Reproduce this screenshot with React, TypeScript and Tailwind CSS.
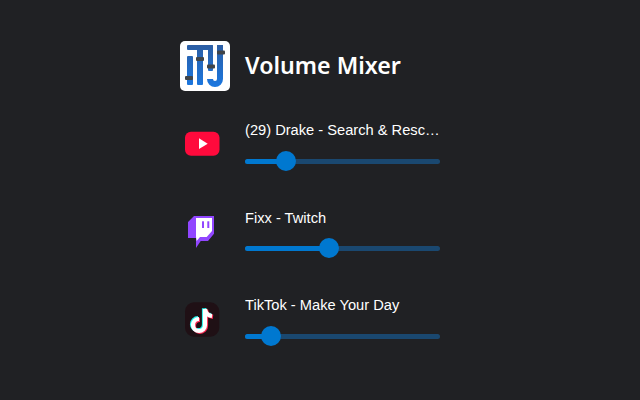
import React from "react";

function Logo() {
  return (
    <div className="w-[50px] h-[50px] bg-white rounded-[5px] shrink-0">
      <svg width="50" height="50" viewBox="0 0 50 50">
        <defs>
          <linearGradient id="blue" gradientUnits="userSpaceOnUse" x1="0" y1="4" x2="0" y2="47">
            <stop offset="0" stopColor="#2c5ea4" />
            <stop offset="1" stopColor="#1a78e2" />
          </linearGradient>
        </defs>
        <g fill="url(#blue)">
          <rect x="7" y="4" width="26" height="5" rx="1" />
          <rect x="7" y="15" width="6" height="29" rx="1" />
          <rect x="17" y="4" width="6" height="40" rx="1" />
          <rect x="28" y="4" width="5" height="26" rx="1" />
        </g>
        <path d="M40 4V38a5 5 0 0 1-10 0" fill="none" stroke="url(#blue)" strokeWidth="6" />
        <g fill="#404448">
          <rect x="5" y="35" width="8" height="4" rx="1" />
          <rect x="16" y="16" width="8" height="4" rx="1" />
          <rect x="27" y="23.500" width="8" height="4" rx="1" />
          <rect x="37" y="9.500" width="8" height="4" rx="1" />
        </g>
      </svg>
    </div>
  );
}

// row icons share one 45x50 box, drawn in row coordinates
function YouTube() {
  return (
    <svg width="45" height="50" viewBox="0 0 45 50">
      <rect x="5" y="11.700" width="34.500" height="24" rx="6" fill="#ff0a3c" />
      <path d="M19 18.300v10.700l8.700-5.300z" fill="#fff" />
    </svg>
  );
}

function Twitch() {
  return (
    <svg width="45" height="50" viewBox="0 0 45 50">
      <path d="M8 14L14 8H34V25.700L28 33H20.700L16 40V30H8Z" fill="#9146ff" />
      <path d="M16 10H32V23L26.700 29H20L16.700 33L16 29Z" fill="#fff" />
      <rect x="22" y="13.300" width="2" height="6.700" fill="#9146ff" />
      <rect x="27.300" y="13.300" width="2" height="6.700" fill="#9146ff" />
    </svg>
  );
}

function TikTok() {
  const note = "M25 14V30a6 6 0 1 1-6-6M25 14c.5 3.500 3 6.500 7 7";
  return (
    <svg width="45" height="50" viewBox="0 0 45 50">
      <rect x="5" y="7.300" width="34.300" height="34.400" rx="9" fill="#1f1015" />
      <g fill="none" strokeWidth="4.200">
        <path d={note} stroke="#25f4ee" transform="translate(-1 -0.800)" />
        <path d={note} stroke="#fe2c55" transform="translate(1 0.800)" />
        <path d={note} stroke="#fff" />
      </g>
    </svg>
  );
}

const rows = [
  { title: "(29) Drake - Search & Rescue", value: 41, icon: <YouTube /> },
  { title: "Fixx - Twitch", value: 84, icon: <Twitch /> },
  { title: "TikTok - Make Your Day", value: 26, icon: <TikTok /> },
];

export default function App() {
  return (
    <div className="w-[640px] h-[400px] bg-[#202124] overflow-hidden font-['Liberation_Sans',sans-serif] text-white pl-[180px]">
      <div className="w-[260px] pt-[41px]">
        <div className="flex items-center gap-[15px]">
          <Logo />
          <h1 className="font-['Noto_Sans',sans-serif] font-semibold text-[23.200px] leading-[46px] pb-[2px]">Volume Mixer</h1>
        </div>
        <div className="flex flex-col gap-[37.500px] mt-[29px]">
          {rows.map((row) => (
            <div key={row.title} className="flex items-start h-[50px]">
              <div className="w-[65px] shrink-0">{row.icon}</div>
              <div className="w-[195px] pt-[2.200px]">
                <div className="text-[14.667px] leading-[17px] truncate">{row.title}</div>
                <div className="relative h-[5px] mt-[19.550px] rounded-full bg-[#1a4870]">
                  <div className="h-full rounded-full bg-[#0078d0]" style={{ width: row.value }} />
                  <div
                    className="absolute top-[-8px] w-5 h-5 -ml-[10px] rounded-full bg-[#0078d0]"
                    style={{ left: row.value }}
                  />
                </div>
              </div>
            </div>
          ))}
        </div>
      </div>
    </div>
  );
}
